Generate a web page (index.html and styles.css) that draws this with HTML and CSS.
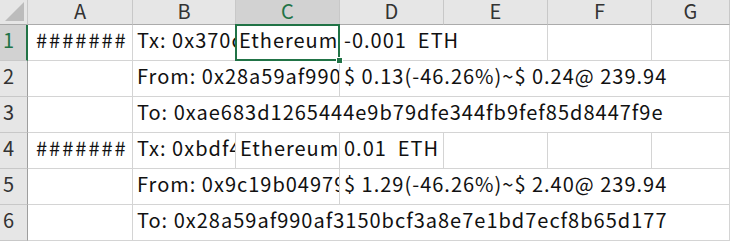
FILE: index.html
```html
<!DOCTYPE html>
<html lang="ja">
<head>
  <meta charset="UTF-8">
  <meta name="viewport" content="width=device-width, initial-scale=1.0">
  <title>Transactions</title>
  <link rel="stylesheet" href="styles.css">
</head>
<body>

  <div class="sheet">
    <!-- header row -->
    <div class="corner"></div>
    <div class="col-head">A</div>
    <div class="col-head">B</div>
    <div class="col-head current">C</div>
    <div class="col-head">D</div>
    <div class="col-head">E</div>
    <div class="col-head">F</div>
    <div class="col-head">G</div>

    <!-- 1 -->
    <div class="row-head current">1</div>
    <div class="cell hash">#######</div>
    <div class="cell">Tx: 0x370c9e2f41a8b7d63e0f5a2c9184be7d60f3a5c2d91e847b6a03f5c8e2d17b94</div>
    <div class="cell active">Ethereum</div>
    <div class="cell span-2">-0.001  ETH</div>
    <div class="cell"></div>
    <div class="cell"></div>

    <!-- 2 -->
    <div class="row-head">2</div>
    <div class="cell"></div>
    <div class="cell span-2">From: 0x28a59af990af3150bcf3a8e7e1bd7ecf8b65d177</div>
    <div class="cell span-4">$ 0.13(-46.26%)~$ 0.24@ 239.94</div>

    <!-- 3 -->
    <div class="row-head">3</div>
    <div class="cell"></div>
    <div class="cell span-6">To: 0xae683d1265444e9b79dfe344fb9fef85d8447f9e</div>

    <!-- 4 -->
    <div class="row-head">4</div>
    <div class="cell hash">#######</div>
    <div class="cell">Tx: 0xbdf4a17e05c39d8b2f6e14a7c0d95b3e82f1a6c47d09e5b3a28c61f7d4e0b95a</div>
    <div class="cell">Ethereum</div>
    <div class="cell">0.01  ETH</div>
    <div class="cell"></div>
    <div class="cell"></div>
    <div class="cell"></div>

    <!-- 5 -->
    <div class="row-head">5</div>
    <div class="cell"></div>
    <div class="cell span-2">From: 0x9c19b049790e5fa1d3c82b67e4a0f91d5c3b8e27</div>
    <div class="cell span-4">$ 1.29(-46.26%)~$ 2.40@ 239.94</div>

    <!-- 6 -->
    <div class="row-head">6</div>
    <div class="cell"></div>
    <div class="cell span-6">To: 0x28a59af990af3150bcf3a8e7e1bd7ecf8b65d177</div>
  </div>

</body>
</html>
```

FILE: styles.css
```css
body {
  margin: 0;
  background: white;
  font-family: "Noto Sans CJK JP", "Noto Sans", sans-serif;
  font-size: 20px;
  color: #111;
}

.sheet {
  display: grid;
  grid-template-columns: 28px 105px 103px 104px 104px 104px 104px 1fr;
  grid-template-rows: 25px;
  grid-auto-rows: 36px;
  width: 730px;
  overflow: hidden;
}

.corner {
  background: #e6e6e6;
  border-right: 1px solid #c8c8c8;
  border-bottom: 1px solid #ababab;
  position: relative;
}

.corner::after {
  content: "";
  position: absolute;
  right: 3px;
  bottom: 3px;
  width: 19px;
  height: 19px;
  background: #bcbcbc;
  clip-path: polygon(100% 0, 100% 100%, 0 100%);
}

.col-head {
  background: #e6e6e6;
  border-right: 1px solid #c8c8c8;
  border-bottom: 1px solid #ababab;
  display: flex;
  align-items: center;
  justify-content: center;
  line-height: 1;
  color: #333;
  padding-bottom: 3px;
}

.col-head.current {
  background: #d2d2d2;
  color: #217346;
}

.row-head {
  background: #e6e6e6;
  border-right: 1px solid #9e9e9e;
  border-bottom: 1px solid #c8c8c8;
  display: flex;
  align-items: center;
  padding-left: 3px;
  padding-bottom: 6px;
  color: #333;
}

.row-head.current {
  background: #d2d2d2;
  color: #217346;
  border-right: 2px solid #217346;
}

.cell {
  border-right: 1px solid #d4d4d4;
  border-bottom: 1px solid #d4d4d4;
  display: flex;
  align-items: center;
  padding-left: 4px;
  padding-bottom: 6px;
  letter-spacing: 1px;
  white-space: pre;
  overflow: hidden;
}

.cell.hash {
  padding-left: 8px;
  letter-spacing: 2px;
}

.span-2 { grid-column: span 2; }
.span-4 { grid-column: span 4; }
.span-6 { grid-column: span 6; }

.cell.active {
  position: relative;
  overflow: visible;
  padding-left: 3px;
}

.cell.active::before {
  content: "";
  position: absolute;
  left: -1px;
  top: -1px;
  right: -1px;
  bottom: -1px;
  border: 2px solid #217346;
}

.cell.active::after {
  content: "";
  position: absolute;
  right: -4px;
  bottom: -4px;
  width: 5px;
  height: 5px;
  background: #217346;
  border: 1px solid white;
}
```
